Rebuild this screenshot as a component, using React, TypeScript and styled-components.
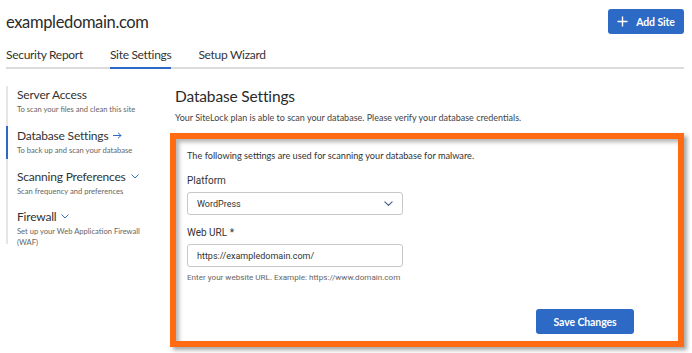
import React from "react";
import styled, { createGlobalStyle } from "styled-components";

const Global = createGlobalStyle`
  html, body { margin: 0; padding: 0; background: #fff; }
  body { font-family: Lato, "Noto Sans", sans-serif; color: #333; }
  * { box-sizing: border-box; }
`;

const Page = styled.div`
  width: 692px;
  height: 353px;
  padding: 0 8px 0 6px;
  overflow: hidden;
`;

const Header = styled.div`
  display: flex;
  justify-content: space-between;
  align-items: flex-start;
  padding-top: 9px;
  height: 42px;
`;

const Title = styled.h1`
  margin: 2px 0 0 0;
  font-size: 16.5px;
  letter-spacing: -0.35px;
  font-weight: 400;
  color: #2b2b2b;
  line-height: 22px;
`;

const PrimaryButton = styled.button<{ $w: number; $h: number }>`
  display: flex;
  align-items: center;
  justify-content: center;
  gap: 8px;
  width: ${(p) => p.$w}px;
  height: ${(p) => p.$h}px;
  background: #2d6ac5;
  color: #fff;
  border: none;
  border-radius: 3px;
  font-family: Lato, sans-serif;
  font-weight: 700;
  font-size: 10.5px;
  letter-spacing: -0.1px;
  padding: 0;
  cursor: pointer;
`;

const Tabs = styled.div`
  display: flex;
  border-bottom: 2px solid #dcdcdc;
  height: 27px;
`;

const Tab = styled.div<{ $active?: boolean; $mr: number }>`
  font-size: 12px;
  letter-spacing: -0.3px;
  color: #333;
  margin-right: ${(p) => p.$mr}px;
  padding-top: 5px;
  height: 27px;
  border-bottom: 2px solid ${(p) => (p.$active ? "#2d6ac5" : "transparent")};
  margin-bottom: -2px;
`;

const Body = styled.div`
  display: flex;
  padding-top: 17px;
`;

const Sidebar = styled.nav`
  width: 164px;
  flex: none;
  border-left: 2px solid #e6e6e6;
  height: 158px;
  display: flex;
  flex-direction: column;
`;

const NavItem = styled.div<{ $active?: boolean; $h: number }>`
  position: relative;
  padding-left: 9px;
  height: ${(p) => p.$h}px;
  &::before {
    content: "";
    position: absolute;
    left: -2px;
    top: -1px;
    bottom: 9px;
    width: 2px;
    background: ${(p) => (p.$active ? "#2d6ac5" : "transparent")};
  }
`;

const NavTitle = styled.div`
  font-size: 12px;
  letter-spacing: -0.2px;
  color: #333;
  line-height: 17px;
  display: flex;
  align-items: center;
  gap: 5px;
`;

const NavSub = styled.div`
  font-size: 7.6px;
  color: #666;
  line-height: 11px;
  margin-top: 1px;
`;

const Main = styled.main`
  flex: 1;
  padding-left: 5px;
  display: flex;
  flex-direction: column;
`;

const MainTitle = styled.h2`
  margin: 0 0 0 0;
  font-size: 15.5px;
  letter-spacing: -0.15px;
  font-weight: 400;
  color: #2b2b2b;
  line-height: 20px;
`;

const MainSub = styled.p`
  margin: 6px 0 0 0;
  font-size: 9px;
  color: #444;
  line-height: 12px;
`;

const Highlight = styled.section`
  margin: 9px 0 0 -5px;
  width: 514px;
  height: 214px;
  border: 6px solid #ff6a13;
  box-shadow: 3px 3px 4px rgba(0, 0, 0, 0.35), inset 3px 3px 4px rgba(0, 0, 0, 0.3);
  padding: 11px 11px 0 11px;
  display: flex;
  flex-direction: column;
`;

const Intro = styled.p`
  margin: 0;
  font-size: 9.2px;
  color: #333;
  line-height: 12px;
`;

const Label = styled.label<{ $mt: number }>`
  display: block;
  margin-top: ${(p) => p.$mt}px;
  font-family: Roboto, sans-serif;
  font-size: 10px;
  color: #333;
  line-height: 13px;
`;

const Field = styled.div`
  margin-top: 5px;
  width: 216px;
  height: 23px;
  border: 1px solid #c8c8c8;
  border-radius: 3px;
  display: flex;
  align-items: center;
  justify-content: space-between;
  padding: 0 9px 0 9px;
  font-family: Roboto, sans-serif;
  font-size: 9px;
  color: #333;
`;

const Help = styled.div`
  margin-top: 5px;
  font-family: Roboto, sans-serif;
  font-size: 8.1px;
  color: #666;
  line-height: 11px;
`;

const Footer = styled.div`
  display: flex;
  justify-content: flex-end;
  margin-top: auto;
  padding: 0 33px 7px 0;
`;

const Chevron = ({ size = 8, color = "#2d6ac5" }: { size?: number; color?: string }) => (
  <svg width={size} height={size * 0.6} viewBox="0 0 10 6" fill="none">
    <path d="M1 1l4 4 4-4" stroke={color} strokeWidth="1.2" strokeLinecap="round" strokeLinejoin="round" />
  </svg>
);

const Arrow = () => (
  <svg width="9" height="7" viewBox="0 0 9 7" fill="none">
    <path d="M0.5 3.5h7.5M5.3 1l2.7 2.5-2.7 2.5" stroke="#2d6ac5" strokeWidth="1" strokeLinecap="round" strokeLinejoin="round" />
  </svg>
);

const Plus = () => (
  <svg width="11" height="11" viewBox="0 0 11 11" fill="none">
    <path d="M5.5 0.5v10M0.5 5.5h10" stroke="#fff" strokeWidth="1.4" />
  </svg>
);

export default function App() {
  return (
    <Page>
      <Global />
      <Header>
        <Title>exampledomain.com</Title>
        <PrimaryButton $w={76} $h={25}>
          <Plus />
          Add Site
        </PrimaryButton>
      </Header>
      <Tabs>
        <Tab $mr={27}>Security Report</Tab>
        <Tab $active $mr={27}>Site Settings</Tab>
        <Tab $mr={0}>Setup Wizard</Tab>
      </Tabs>
      <Body>
        <Sidebar>
          <NavItem $h={41}>
            <NavTitle>Server Access</NavTitle>
            <NavSub>To scan your files and clean this site</NavSub>
          </NavItem>
          <NavItem $active $h={41}>
            <NavTitle>
              Database Settings <Arrow />
            </NavTitle>
            <NavSub>To back up and scan your database</NavSub>
          </NavItem>
          <NavItem $h={40}>
            <NavTitle>
              Scanning Preferences <Chevron />
            </NavTitle>
            <NavSub>Scan frequency and preferences</NavSub>
          </NavItem>
          <NavItem $h={36}>
            <NavTitle>
              Firewall <Chevron />
            </NavTitle>
            <NavSub>
              Set up your Web Application Firewall
              <br />
              (WAF)
            </NavSub>
          </NavItem>
        </Sidebar>
        <Main>
          <MainTitle>Database Settings</MainTitle>
          <MainSub>
            Your SiteLock plan is able to scan your database. Please verify your database credentials.
          </MainSub>
          <Highlight>
            <Intro>The following settings are used for scanning your database for malware.</Intro>
            <Label $mt={12}>Platform</Label>
            <Field>
              WordPress
              <Chevron size={9} color="#3b5a8a" />
            </Field>
            <Label $mt={11}>Web URL *</Label>
            <Field>https://exampledomain.com/</Field>
            <Help>Enter your website URL. Example: https://www.domain.com</Help>
            <Footer>
              <PrimaryButton $w={98} $h={25}>Save Changes</PrimaryButton>
            </Footer>
          </Highlight>
        </Main>
      </Body>
    </Page>
  );
}
